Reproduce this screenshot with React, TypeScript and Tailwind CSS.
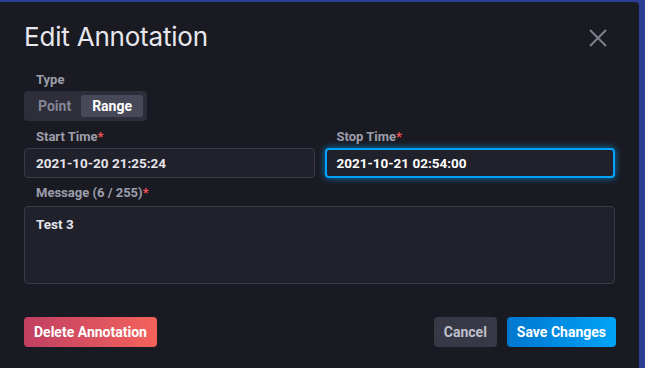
// Edit Annotation dialog — dark overlay form with type toggle, time range and message

import { useState } from "react";

const TITLE_FONT = { fontFamily: "Inter, 'Noto Sans', sans-serif" };
const BODY_FONT = { fontFamily: "Roboto, 'Liberation Sans', sans-serif" };

function Label({ text, required }: { text: string; required?: boolean }) {
  return (
    <div className="pl-[12px] text-[13px] leading-[16px] font-bold text-[#9d9eac]">
      {text}
      {required && <span className="text-[#f2545b]">*</span>}
    </div>
  );
}

export default function App() {
  const [type, setType] = useState<"point" | "range">("range");

  return (
    <div className="w-[645px] h-[368px] bg-[#2b3e93] pt-[2px] pr-[6px] overflow-hidden" style={BODY_FONT}>
      <div className="h-full bg-[#1a1b22] rounded-tr-[4px] px-6 flex flex-col">
        {/* Header */}
        <div className="flex items-center justify-between pt-[19px]">
          <h1 className="text-[26px] leading-[32px] font-normal text-[#e7e7ed] tracking-[-0.2px]" style={TITLE_FONT}>
            Edit Annotation
          </h1>
          <button className="mr-[8px] mt-[1px] text-[#7e7f8c]">
            <svg width="18" height="18" viewBox="0 0 18 18" fill="none" stroke="currentColor" strokeWidth="2">
              <path d="M1 1L17 17M17 1L1 17" />
            </svg>
          </button>
        </div>

        {/* Type */}
        <div className="mt-[19px]">
          <Label text="Type" />
        </div>
        <div className="mt-[3px] flex">
          <div className="flex h-[30px] p-[4px] rounded-[4px] bg-[#2d2e39]">
            <button
              onClick={() => setType("point")}
              className={`px-[10px] rounded-[3px] text-[14px] font-bold ${type === "point" ? "bg-[#474858] text-white" : "text-[#858695]"}`}
            >
              Point
            </button>
            <button
              onClick={() => setType("range")}
              className={`px-[11px] rounded-[3px] text-[14px] font-bold ${type === "range" ? "bg-[#474858] text-white" : "text-[#858695]"}`}
            >
              Range
            </button>
          </div>
        </div>

        {/* Times */}
        <div className="mt-[8px] grid grid-cols-2 gap-x-[10px]">
          <div>
            <Label text="Start Time" required />
            <div className="mt-[3px] h-[30px] rounded-[4px] border border-[#393a48] bg-[#20212a] px-[11px] flex items-center text-[13.5px] font-bold text-[#e4e4ea]">
              2021-10-20 21:25:24
            </div>
          </div>
          <div>
            <Label text="Stop Time" required />
            <div className="mt-[3px] h-[30px] rounded-[4px] border-2 border-[#00a3ff] bg-[#20212a] px-[10px] flex items-center text-[13.5px] font-bold text-white shadow-[0_0_6px_1px_rgba(0,163,255,0.55)]">
              2021-10-21 02:54:00
            </div>
          </div>
        </div>

        {/* Message */}
        <div className="mt-[7px]">
          <Label text="Message (6 / 255)" required />
        </div>
        <div className="mt-[5px] h-[78px] rounded-[4px] border border-[#393a48] bg-[#20212a] px-[11px] pt-[9px] text-[13.5px] leading-[16px] font-bold text-[#e4e4ea]">
          Test 3
        </div>

        {/* Footer */}
        <div className="mt-[33px] flex items-center">
          <button className="h-[30px] px-[10px] rounded-[4px] text-[14px] font-bold text-white bg-gradient-to-r from-[#c03f62] to-[#f4625a]">
            Delete Annotation
          </button>
          <div className="ml-auto flex gap-[10px] -mr-[1px]">
            <button className="h-[30px] px-[10px] rounded-[4px] text-[14px] font-bold text-[#bfc0cc] bg-[#383946]">
              Cancel
            </button>
            <button className="h-[30px] px-[10px] rounded-[4px] text-[14px] font-bold text-white bg-gradient-to-r from-[#0077cf] to-[#00a3f7]">
              Save Changes
            </button>
          </div>
        </div>
      </div>
    </div>
  );
}
